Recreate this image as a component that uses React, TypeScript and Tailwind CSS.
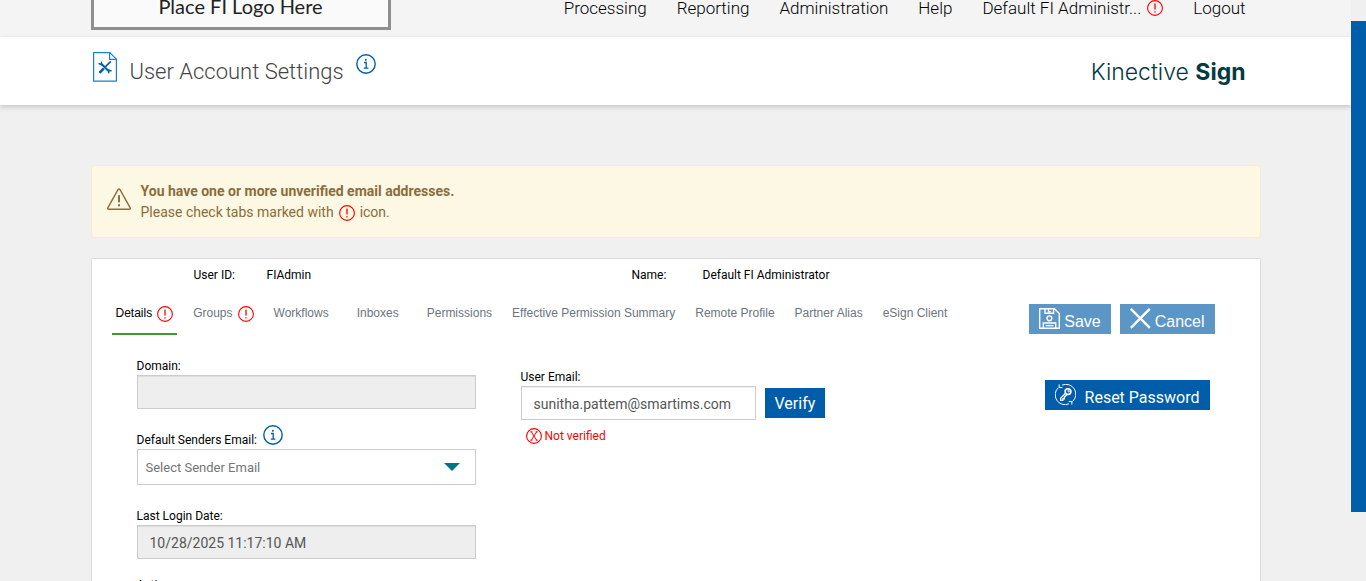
import React from 'react';

const navItems = ['Processing', 'Reporting', 'Administration', 'Help'];

const tabs = [
  { id: 'details', label: 'Details', warning: true, active: true },
  { id: 'groups', label: 'Groups', warning: true },
  { id: 'workflows', label: 'Workflows', wide: true },
  { id: 'inboxes', label: 'Inboxes', wide: true },
  { id: 'permissions', label: 'Permissions' },
  { id: 'summary', label: 'Effective Permission Summary' },
  { id: 'remote', label: 'Remote Profile' },
  { id: 'partner', label: 'Partner Alias' },
  { id: 'esign', label: 'eSign Client' }
];

const WarningIcon = () => (
  <svg className="h-4 w-4 shrink-0" viewBox="0 0 16 16" fill="none" stroke="#ff0000" aria-hidden="true">
    <circle cx="8" cy="8" r="7.4" strokeWidth="1.1" />
    <path d="M8 3.6v6" strokeWidth="1.3" />
    <path d="M8 11.2v1.4" strokeWidth="1.3" />
  </svg>
);

const InfoIcon = () => (
  <svg className="h-5 w-5 shrink-0" viewBox="0 0 20 20" fill="none" stroke="#005da9" aria-hidden="true">
    <circle cx="10" cy="10" r="9.2" strokeWidth="1.4" />
    <circle cx="9.8" cy="5.8" r="1" fill="#005da9" stroke="none" />
    <path d="M8 8.5h2.2v5.2M7.8 14.2h4.6" strokeWidth="1.3" />
  </svg>
);

const SettingsIcon = () => (
  <svg className="h-[30px] w-6 shrink-0" viewBox="0 0 24 30" fill="none" stroke="#1583c7" aria-hidden="true">
    <path d="M.6.6h16.2l6.6 6.6v21.9H.6z" strokeWidth="1.2" />
    <path d="M16.6.6v6.7h6.8" strokeWidth="1.2" />
    <path d="M8 11.5l8 8" stroke="#005da9" strokeWidth="2" />
    <path d="M17.8 9.4l-6 6" stroke="#005da9" strokeWidth="1.6" />
    <path d="M10.8 16.4l-4.4 4.4" stroke="#005da9" strokeWidth="2.6" />
    <path d="M5.6 11.4l2.6 1.3.4-3" stroke="#005da9" strokeWidth="1.4" />
    <path d="M18.6 19.2l-2.6-1.1-.5 3.2" stroke="#005da9" strokeWidth="1.4" />
  </svg>
);

const SaveIcon = () => (
  <svg className="h-[21px] w-[21px] shrink-0" viewBox="0 0 21 21" fill="none" stroke="currentColor" strokeWidth="1.4" aria-hidden="true">
    <path d="M.7.7h14.8l4.8 4.8v14.8H.7z" />
    <path d="M6 .7v4.6h8.6V.7M9.5 1v2.6h2.4" />
    <circle cx="10.4" cy="10.3" r="2.4" />
    <path d="M4.3 20v-5h12.4v5M6.6 17.6h7.8" />
  </svg>
);

const CancelIcon = () => (
  <svg className="h-[21px] w-[21px] shrink-0" viewBox="0 0 21 21" fill="none" stroke="currentColor" strokeWidth="2.4" aria-hidden="true">
    <path d="M.8.8l19 19M19.8.8l-19 19" />
  </svg>
);

const ResetIcon = () => (
  <svg className="h-[21px] w-[21px] shrink-0" viewBox="0 0 21 21" fill="none" stroke="currentColor" strokeWidth="1" aria-hidden="true">
    <path d="M7 1.2a9.8 9.8 0 0 1 10.6 16.2M14 19.8A9.8 9.8 0 0 1 3.4 3.6" />
    <path d="M4.2.4l-.2 3 3.4.2M16.8 20.6l.2-3-3.2-.2" />
    <circle cx="13" cy="7.6" r="2.9" strokeWidth="1.6" />
    <circle cx="13.6" cy="7" r=".8" />
    <path d="M10.8 9l-5.2 5.2v2.2h2.2v-1.6h1.5v-1.6l2.8-2.6" strokeWidth="1.3" />
  </svg>
);

const labelClass = 'text-xs leading-[14px] text-black';
const disabledInputClass =
  'block h-[34px] w-full border border-[#ccc] bg-[#eee] px-3 pt-0.5 text-sm text-[#555] shadow-[inset_0_1px_1px_rgba(0,0,0,0.075)]';
const actionClass =
  "flex h-[30px] items-start gap-1 bg-[#5c96c6] px-2.5 pt-1 font-['Liberation_Sans',sans-serif]";

const App = () => {
  return (
    <div className="flex h-screen overflow-hidden bg-[#f0f0f0] font-['Roboto',sans-serif] text-black">
      <div className="min-w-0 flex-1">
        {/* Top navigation */}
        <header className="flex h-[37px] items-end overflow-hidden bg-[#f4f4f4]">
          <div className="mx-auto flex w-full max-w-[1170px] shrink-0 items-end justify-between pr-[15px]">
            <a
              href="#"
              className="mb-[7px] flex h-[76px] w-[300px] items-end justify-center border-[3px] border-[#8f8f8f] bg-[#fafafa] pb-[9px] font-['Lato',sans-serif] text-xl leading-6 text-[#222]"
            >
              Place FI Logo Here
            </a>
            <nav className="mb-[17px] flex items-center gap-[30px] text-[17px] leading-6 font-light">
              {navItems.map((item) => (
                <a key={item} href="#">{item}</a>
              ))}
              <a href="#" className="flex items-center gap-1.5">
                Default FI Administr...
                <WarningIcon />
              </a>
              <a href="#">Logout</a>
            </nav>
          </div>
        </header>

        {/* Page title */}
        <section className="bg-white shadow-[0_2px_5px_rgba(0,0,0,0.18)]">
          <div className="mx-auto flex h-[68px] max-w-[1170px] items-center justify-between pr-[15px]">
            <div className="flex items-center">
              <div className="mb-2 ml-0.5">
                <SettingsIcon />
              </div>
              <h1 className="mt-0.5 ml-[13px] text-[22px] leading-8 font-light text-[#444]">User Account Settings</h1>
              <button type="button" aria-label="Help" className="mb-3.5 ml-3">
                <InfoIcon />
              </button>
            </div>
            <div className="mt-0.5 font-['Inter',sans-serif] text-[23px] leading-8 text-[#043a42]">
              <span className="font-light">Kinective</span> <span className="font-bold">Sign</span>
            </div>
          </div>
        </section>

        <main className="mx-auto max-w-[1170px] pt-[60px]">
          {/* Unverified email notice */}
          <div role="alert" className="flex items-start rounded-[3px] border border-[#faebcc] bg-[#fdf8e3] px-[15px] pt-[15px] pb-3.5 text-sm leading-[21px] text-[#8a6d3b]">
            <svg className="mt-1.5 mr-2.5 h-6 w-6 shrink-0" viewBox="0 0 24 24" fill="none" stroke="currentColor" strokeWidth="1.4" aria-hidden="true">
              <path d="M11 2.6a1.2 1.2 0 0 1 2 0l10.2 18.2a1 1 0 0 1-.9 1.5H1.7a1 1 0 0 1-.9-1.5z" />
              <path d="M12 8.2v7" strokeWidth="2" />
              <path d="M12 17.2v2" strokeWidth="2" />
            </svg>
            <div>
              <p className="font-bold">You have one or more unverified email addresses.</p>
              <p className="flex items-center gap-[5px]">
                Please check tabs marked with
                <WarningIcon />
                icon.
              </p>
            </div>
          </div>

          <div className="mt-5 border border-[#ddd] bg-white">
            {/* User summary */}
            <dl className="flex pt-2 pl-[102px] text-xs leading-4">
              <dt className="w-[73px]">User ID:</dt>
              <dd className="w-[365px]">FIAdmin</dd>
              <dt className="w-[71px]">Name:</dt>
              <dd>Default FI Administrator</dd>
            </dl>

            {/* Tabs and actions */}
            <div className="flex items-start justify-between pt-5 pr-[45px] pl-5">
              <div role="tablist" className="flex gap-3 font-['Liberation_Sans',sans-serif] text-xs">
                {tabs.map((tab) => (
                  <button
                    key={tab.id}
                    type="button"
                    role="tab"
                    aria-selected={!!tab.active}
                    className={`flex h-8 items-start gap-[5px] border-b-2 pl-1 whitespace-nowrap ${tab.wide ? 'pr-3' : 'pr-1'} ${
                      tab.active ? 'border-[#3c9c28] text-black' : 'border-transparent text-[#6c757d]'
                    }`}
                  >
                    <span className="leading-5">{tab.label}</span>
                    {tab.warning && (
                      <span className="pt-[3px]">
                        <WarningIcon />
                      </span>
                    )}
                  </button>
                ))}
              </div>
              <div className="mt-px flex gap-[9px] text-base text-white">
                <button type="button" className={actionClass}>
                  <SaveIcon />
                  <span className="pt-0.5 leading-6">Save</span>
                </button>
                <button type="button" className={actionClass}>
                  <CancelIcon />
                  <span className="pt-0.5 leading-6">Cancel</span>
                </button>
              </div>
            </div>

            {/* Details form */}
            <form className="flex items-start pt-6 pr-[50px] pl-[45px]">
              <div className="w-[339px]">
                <label htmlFor="domain" className={`block pb-0.5 ${labelClass}`}>Domain:</label>
                <input id="domain" disabled className={disabledInputClass} />

                <div className="mt-4 flex h-6 items-start gap-1.5">
                  <label htmlFor="sender" className={`pt-2 ${labelClass}`}>Default Senders Email:</label>
                  <button type="button" aria-label="About default senders email">
                    <InfoIcon />
                  </button>
                </div>
                <div className="relative">
                  <select id="sender" className="block h-9 w-full appearance-none border border-[#ccc] bg-white px-2 pt-0.5 text-[13px] text-[#757575]">
                    <option>Select Sender Email</option>
                  </select>
                  <svg className="pointer-events-none absolute top-3.5 right-4 h-2 w-4" viewBox="0 0 16 8" aria-hidden="true">
                    <path d="M0 0h16L8 8z" fill="#007585" />
                  </svg>
                </div>

                <label htmlFor="lastLogin" className={`mt-6 block pb-0.5 ${labelClass}`}>Last Login Date:</label>
                <input id="lastLogin" disabled defaultValue="10/28/2025 11:17:10 AM" className={disabledInputClass} />

                <label htmlFor="active" className={`mt-[19px] block pb-0.5 ${labelClass}`}>Active:</label>
                <input id="active" disabled className={disabledInputClass} />
              </div>

              <div className="ml-[45px] pt-[11px]">
                <label htmlFor="email" className={`block pb-0.5 ${labelClass}`}>User Email:</label>
                <div className="flex items-center gap-[9px]">
                  <input
                    id="email"
                    defaultValue="sunitha.pattem@smartims.com"
                    className="h-[34px] w-[235px] border border-[#ccc] bg-white px-3 pt-0.5 text-sm text-[#555] shadow-[inset_0_1px_1px_rgba(0,0,0,0.075)]"
                  />
                  <button type="button" className="h-[30px] bg-[#005da9] px-2.5 pt-0.5 text-base text-white">Verify</button>
                </div>
                <p className="mt-2 flex items-center gap-[3px] pl-[5px] text-xs leading-4 text-[#ff0000]">
                  <svg className="h-4 w-4" viewBox="0 0 16 16" fill="none" stroke="currentColor" aria-hidden="true">
                    <circle cx="8" cy="8" r="7.4" strokeWidth="1.1" />
                    <path d="M5.3 3.8l5.4 8.4M10.7 3.8l-5.4 8.4M4.4 3.8h2M9.6 3.8h2M4.4 12.2h2M9.6 12.2h2" />
                  </svg>
                  Not verified
                </p>
              </div>

              <button type="button" className="mt-[21px] ml-auto flex h-[30px] items-start gap-[9px] bg-[#005da9] px-2.5 pt-1 text-base text-white">
                <ResetIcon />
                <span className="pt-0.5 leading-6">Reset Password</span>
              </button>
            </form>
          </div>
        </main>
      </div>

      {/* Scroll track */}
      <div className="w-[15px] shrink-0 bg-[#f0f0f0] pt-[21px]">
        <div className="h-[491px] bg-[#005da9]" />
      </div>
    </div>
  );
};

export default App;
